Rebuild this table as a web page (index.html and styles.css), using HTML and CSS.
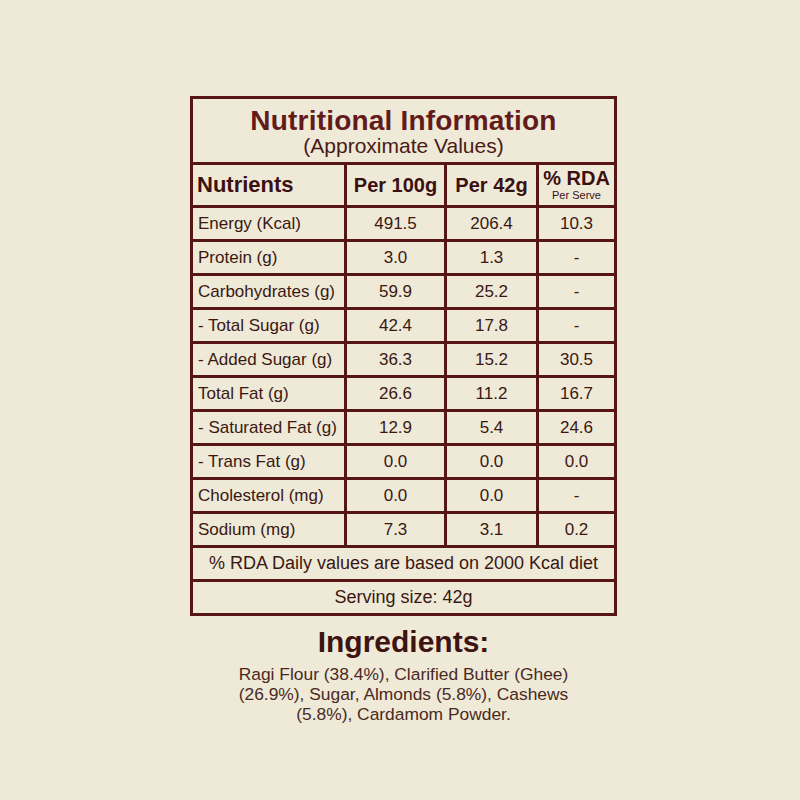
FILE: index.html
```html
<!DOCTYPE html>
<html lang="en">
<head>
<meta charset="utf-8">
<title>Nutritional Information</title>
<link rel="stylesheet" href="styles.css">
</head>
<body>
<main class="page">
  <section class="panel">
    <header class="panel-title">
      <h1 class="title">Nutritional Information</h1>
      <p class="subtitle">(Approximate Values)</p>
    </header>
    <div class="grid">
      <div class="cell head head-name">Nutrients</div>
      <div class="cell head">Per 100g</div>
      <div class="cell head">Per 42g</div>
      <div class="cell head head-rda"><span class="rda">% RDA</span><span class="rda-sub">Per Serve</span></div>

      <div class="cell name">Energy (Kcal)</div><div class="cell">491.5</div><div class="cell">206.4</div><div class="cell">10.3</div>
      <div class="cell name">Protein (g)</div><div class="cell">3.0</div><div class="cell">1.3</div><div class="cell">-</div>
      <div class="cell name">Carbohydrates (g)</div><div class="cell">59.9</div><div class="cell">25.2</div><div class="cell">-</div>
      <div class="cell name">- Total Sugar (g)</div><div class="cell">42.4</div><div class="cell">17.8</div><div class="cell">-</div>
      <div class="cell name">- Added Sugar (g)</div><div class="cell">36.3</div><div class="cell">15.2</div><div class="cell">30.5</div>
      <div class="cell name">Total Fat (g)</div><div class="cell">26.6</div><div class="cell">11.2</div><div class="cell">16.7</div>
      <div class="cell name">- Saturated Fat (g)</div><div class="cell">12.9</div><div class="cell">5.4</div><div class="cell">24.6</div>
      <div class="cell name">- Trans Fat (g)</div><div class="cell">0.0</div><div class="cell">0.0</div><div class="cell">0.0</div>
      <div class="cell name">Cholesterol (mg)</div><div class="cell">0.0</div><div class="cell">0.0</div><div class="cell">-</div>
      <div class="cell name">Sodium (mg)</div><div class="cell">7.3</div><div class="cell">3.1</div><div class="cell">0.2</div>

      <div class="cell wide">% RDA Daily values are based on 2000 Kcal diet</div>
      <div class="cell wide">Serving size: 42g</div>
    </div>
  </section>
  <section class="ingredients">
    <h2 class="ing-title">Ingredients:</h2>
    <p class="ing-text">Ragi Flour (38.4%), Clarified Butter (Ghee)<br>(26.9%), Sugar, Almonds (5.8%), Cashews<br>(5.8%), Cardamom Powder.</p>
  </section>
</main>
</body>
</html>
```
FILE: styles.css
```css
html, body {
  margin: 0;
  padding: 0;
}
body {
  background: #efe9d7;
  font-family: "Liberation Sans", Arial, sans-serif;
  color: #3a1812;
  width: 800px;
  height: 800px;
  overflow: hidden;
}
.page {
  width: 427px;
  margin: 96px 0 0 190px;
  display: flex;
  flex-direction: column;
}
.panel {
  border: 3px solid #561614;
  background: #561614;
  display: flex;
  flex-direction: column;
  gap: 3px;
}
.panel-title {
  background: #efe9d7;
  height: 63px;
  box-sizing: border-box;
  padding-top: 8px;
  text-align: center;
}
.title {
  margin: 0;
  font-size: 28px;
  line-height: 28px;
  font-weight: 700;
  color: #621b1a;
  letter-spacing: 0.2px;
}
.subtitle {
  margin: 0;
  font-size: 21px;
  line-height: 22px;
  color: #4a1a14;
}
.grid {
  display: grid;
  grid-template-columns: 151px 97px 89px 75px;
  grid-template-rows: 40px repeat(12, 31px);
  gap: 3px;
}
.cell {
  background: #efe9d7;
  display: flex;
  align-items: center;
  justify-content: center;
  font-size: 17px;
  color: #3a1812;
}
.cell.name {
  justify-content: flex-start;
  padding-left: 5px;
}
.cell.head {
  font-weight: 700;
  font-size: 20px;
  color: #3a1010;
}
.cell.head-name {
  justify-content: flex-start;
  padding-left: 4px;
  font-size: 22px;
}
.cell.head-rda {
  flex-direction: column;
  padding-bottom: 2px;
}
.rda {
  font-size: 20px;
  line-height: 22px;
}
.rda-sub {
  font-size: 11px;
  line-height: 12px;
  font-weight: 400;
}
.cell.wide {
  grid-column: 1 / -1;
  font-size: 18px;
}
.ingredients {
  text-align: center;
  margin-top: 11px;
}
.ing-title {
  margin: 0;
  font-size: 30px;
  line-height: 30px;
  font-weight: 700;
  color: #3d1410;
}
.ing-text {
  margin: 7px 0 0;
  font-size: 17.4px;
  line-height: 20px;
  color: #4a2a1e;
}
```
